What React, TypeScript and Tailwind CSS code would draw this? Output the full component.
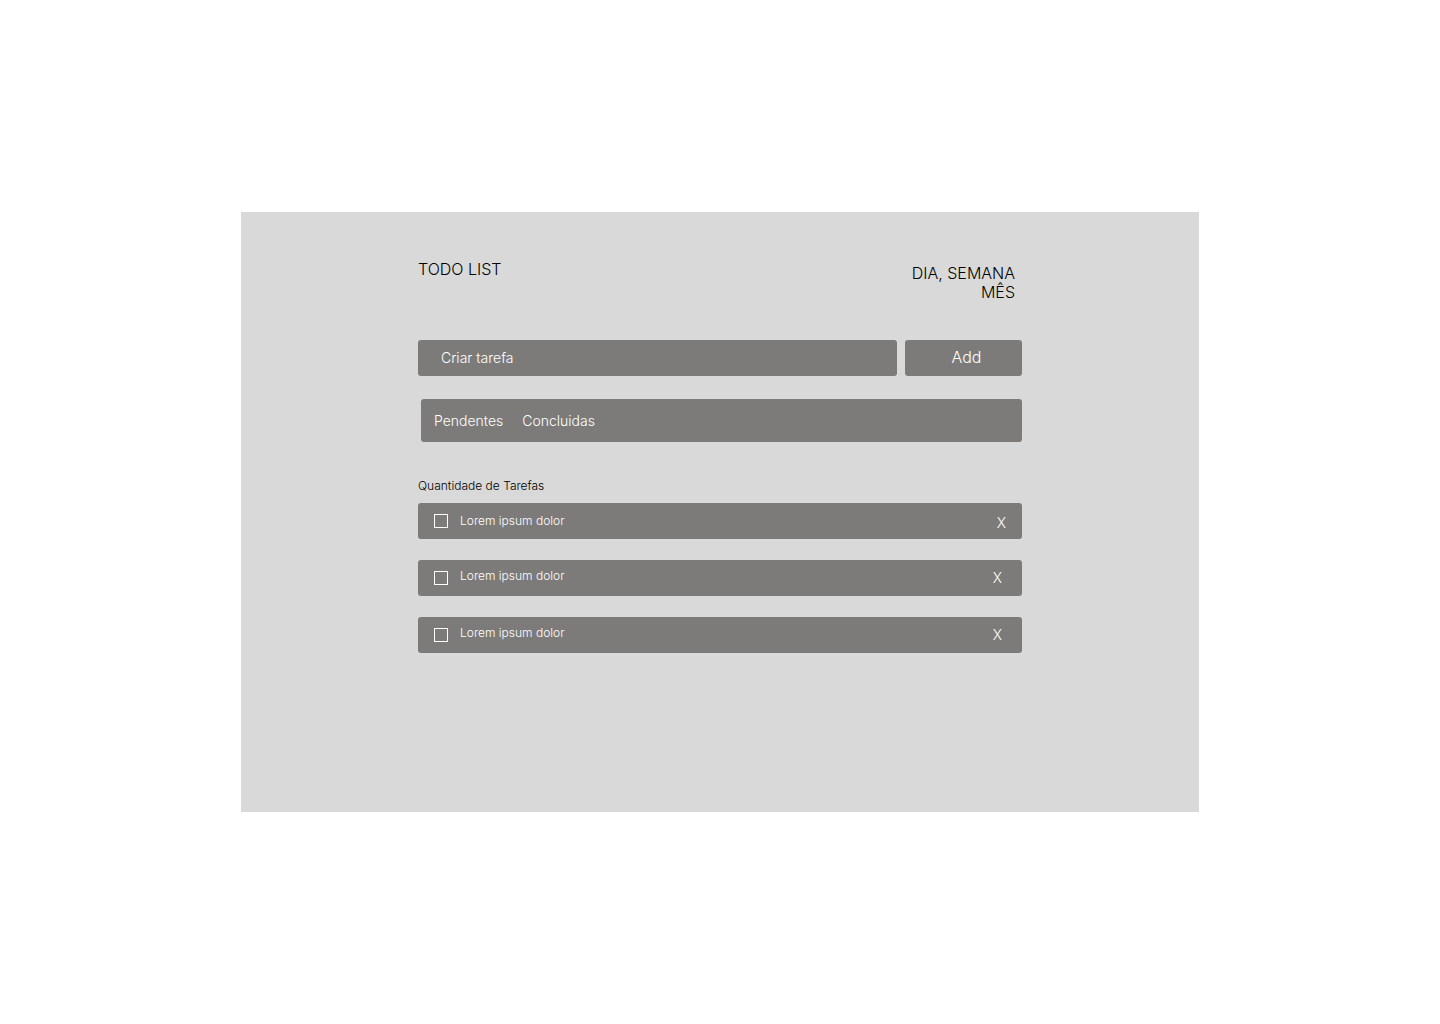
import React, { useState } from "react";

const initialTasks = [
  { id: 1, title: "Lorem ipsum dolor", done: false },
  { id: 2, title: "Lorem ipsum dolor", done: false },
  { id: 3, title: "Lorem ipsum dolor", done: false },
];

export default function App() {
  const [tasks, setTasks] = useState(initialTasks);
  const [draft, setDraft] = useState("");

  const addTask = (event: React.FormEvent) => {
    event.preventDefault();
    if (!draft.trim()) return;
    setTasks([...tasks, { id: Date.now(), title: draft.trim(), done: false }]);
    setDraft("");
  };

  const toggle = (id: number) =>
    setTasks(tasks.map((t) => (t.id === id ? { ...t, done: !t.done } : t)));

  return (
    <div className="flex min-h-screen items-center justify-center bg-white font-['Inter',sans-serif] font-light">
      <main className="min-h-[600px] w-2/3 max-w-[958px] bg-[#d9d9d9] py-12">
        <div className="mx-auto w-full max-w-[604px]">
          <header className="flex items-start justify-between pr-[7px] text-base leading-[19px] text-black">
            <h1>TODO LIST</h1>
            <p className="pt-1 text-right">
              DIA, SEMANA
              <br />
              MÊS
            </p>
          </header>

          <form onSubmit={addTask} className="mt-[38px] flex h-9 gap-2">
            <input
              type="text"
              aria-label="Criar tarefa"
              placeholder="Criar tarefa"
              value={draft}
              onChange={(e) => setDraft(e.target.value)}
              className="min-w-0 flex-1 rounded-[3px] bg-[#7d7b79] px-[23px] text-sm text-white outline-none placeholder:text-white"
            />
            <button type="submit" className="w-[117px] rounded-[3px] bg-[#7d7b79] pb-0.5 pl-1.5 text-base text-white">
              Add
            </button>
          </form>

          <nav className="mt-[23px] ml-[3px] flex h-[43px] items-center gap-[19px] rounded-[3px] bg-[#7d7b79] px-[13px] text-sm text-white">
            <button type="button">Pendentes</button>
            <button type="button">Concluidas</button>
          </nav>

          <h2 className="mt-9 text-xs leading-4 text-black">Quantidade de Tarefas</h2>

          <ul className="mt-[9px] flex flex-col gap-[21px]">
            {tasks.map((task, index) => (
              <li
                key={task.id}
                className={`flex h-9 items-center justify-between rounded-[3px] bg-[#7d7b79] pl-4 text-white ${index === 0 ? "pr-4" : "pr-5"}`}
              >
                <label className="flex items-center gap-3 text-xs leading-4">
                  <input
                    type="checkbox"
                    checked={task.done}
                    onChange={() => toggle(task.id)}
                    className="size-[14px] appearance-none border border-white checked:bg-white"
                  />
                  <span className={index === 0 ? "" : "pb-1"}>{task.title}</span>
                </label>
                <button
                  type="button"
                  aria-label="Remover tarefa"
                  onClick={() => setTasks(tasks.filter((t) => t.id !== task.id))}
                  className={`text-sm leading-4 ${index === 0 ? "pt-1" : ""}`}
                >
                  X
                </button>
              </li>
            ))}
          </ul>
        </div>
      </main>
    </div>
  );
}
